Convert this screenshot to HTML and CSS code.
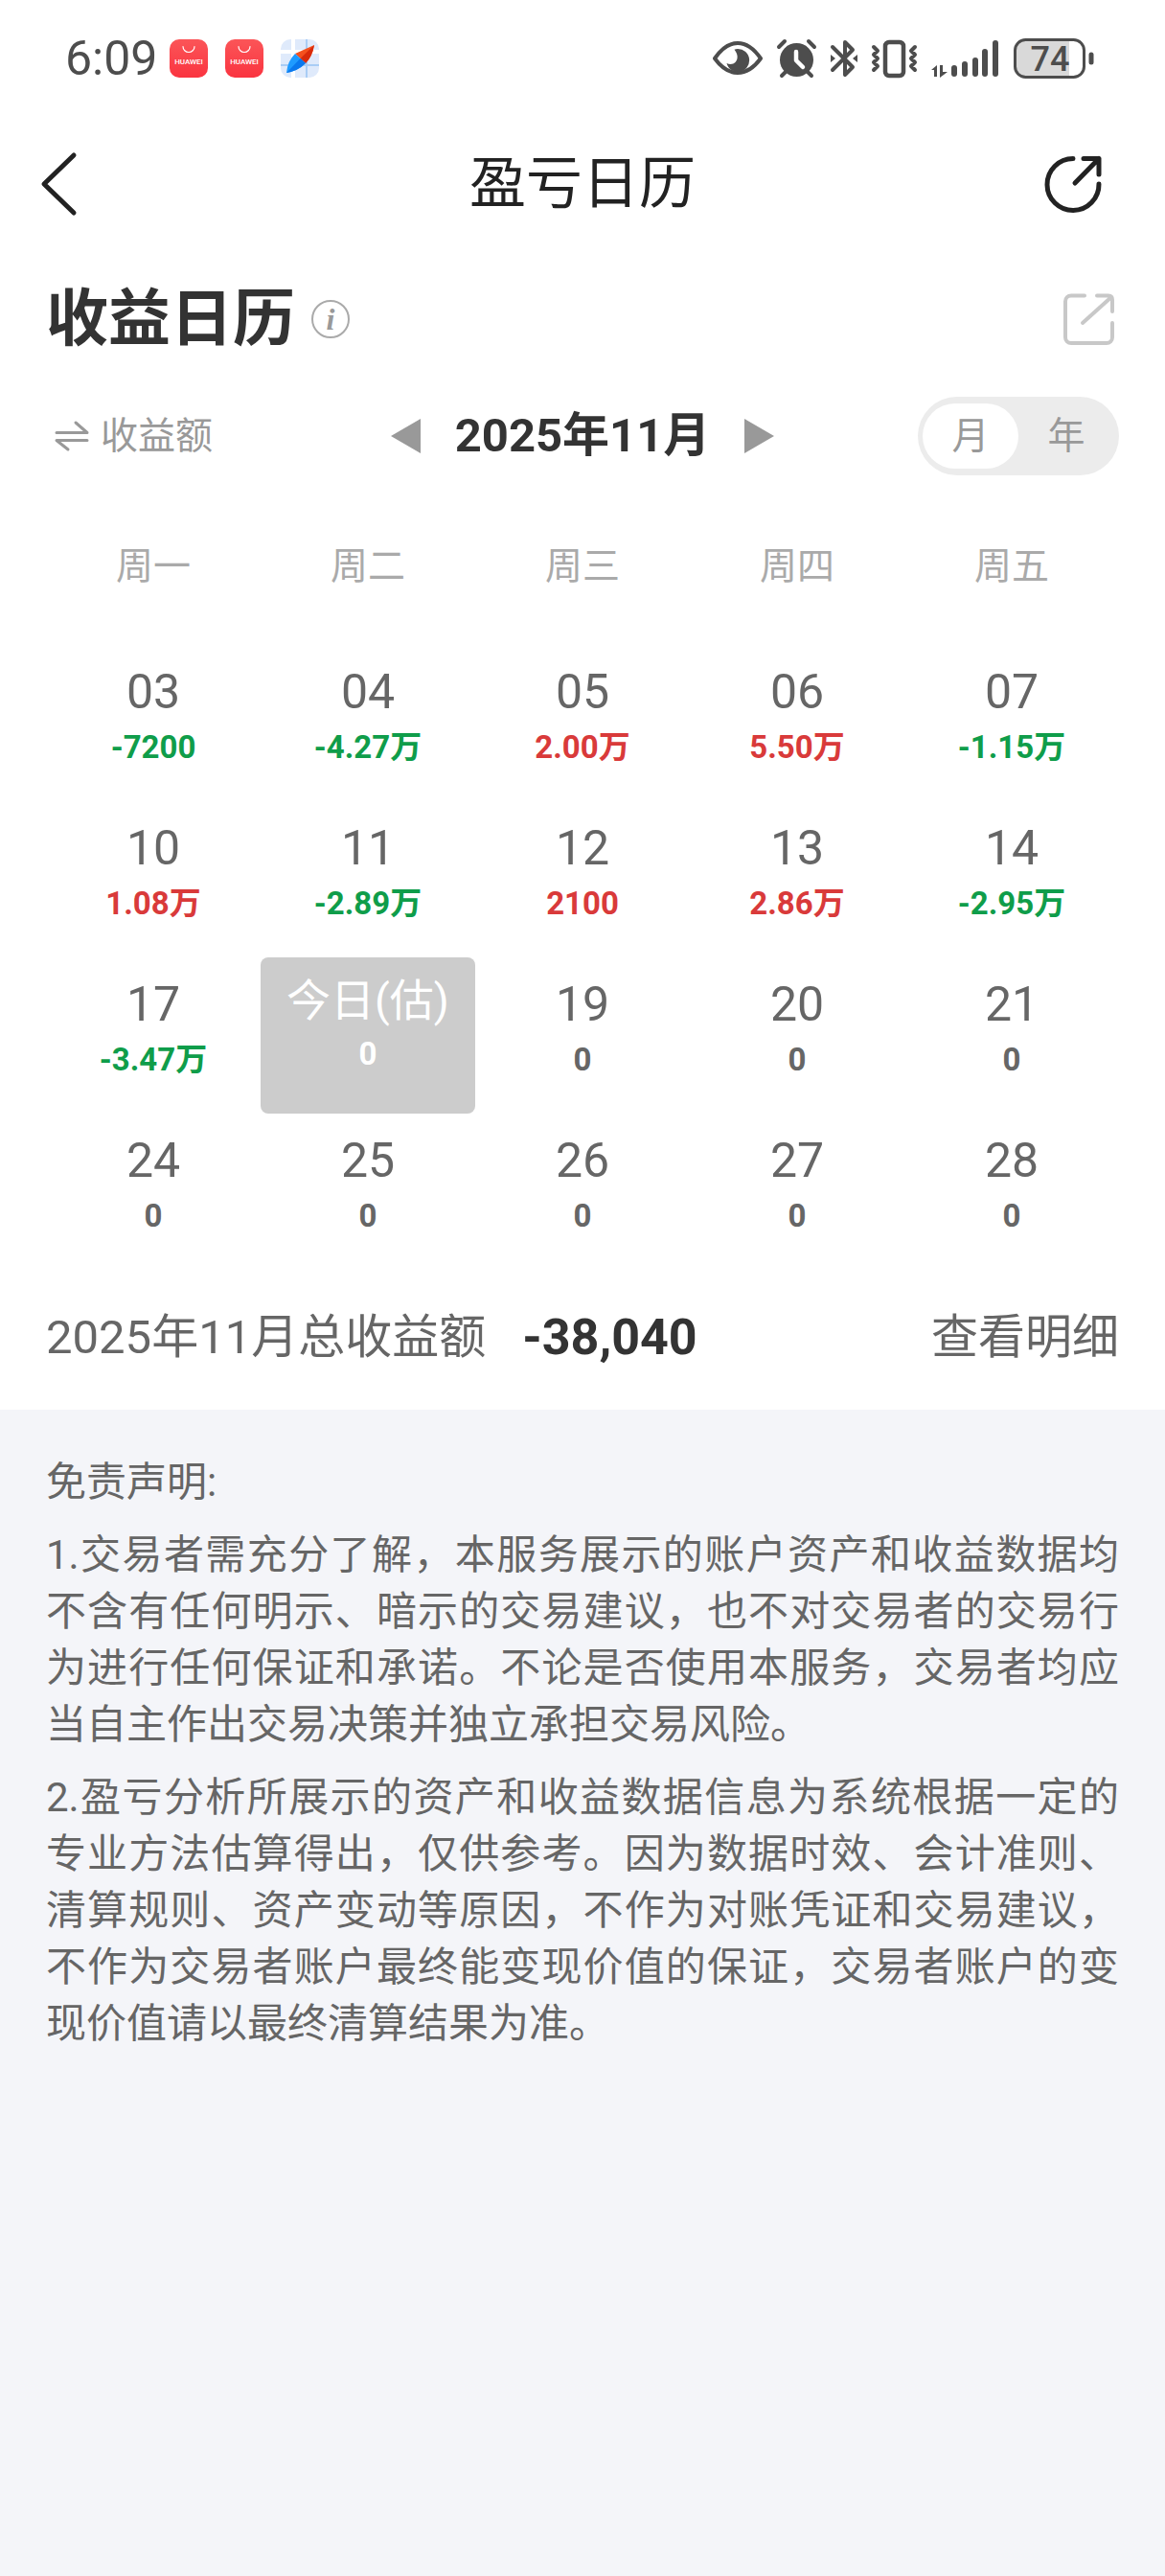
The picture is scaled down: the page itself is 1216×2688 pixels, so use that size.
FILE: index.html
```
<!DOCTYPE html>
<html lang="zh-CN">

<head>
    <meta charset="UTF-8">
    <meta name="viewport" content="width=device-width, initial-scale=1.0">
    <title>盈亏日历</title>
    <link rel="stylesheet" href="styles.css">
</head>

<body>

    <div class="panel">
        <div class="status-bar">
            <span class="time">6:09</span>
            <div class="apps">
                <svg width="40" height="40" viewBox="0 0 40 40">
                    <defs>
                        <linearGradient id="red" x1="0" y1="0" x2="0" y2="1">
                            <stop offset="0" stop-color="#fb5558" />
                            <stop offset="1" stop-color="#fa3440" />
                        </linearGradient>
                    </defs>
                    <rect width="40" height="40" rx="10" fill="url(#red)" />
                    <path d="M14 7.500a6 6 0 0 0 12 0" fill="none" stroke="#fff" stroke-width="1.200" stroke-linecap="round" />
                    <text x="20" y="26" class="app-text">HUAWEI</text>
                </svg>
                <svg width="40" height="40" viewBox="0 0 40 40">
                    <rect width="40" height="40" rx="10" fill="url(#red)" />
                    <path d="M14 7.500a6 6 0 0 0 12 0" fill="none" stroke="#fff" stroke-width="1.200" stroke-linecap="round" />
                    <text x="20" y="26" class="app-text">HUAWEI</text>
                </svg>
                <svg width="40" height="40" viewBox="0 0 40 40">
                    <defs>
                        <clipPath id="round"><rect width="40" height="40" rx="10" /></clipPath>
                    </defs>
                    <g clip-path="url(#round)">
                        <rect width="40" height="40" fill="#dfeafb" />
                        <path d="M0 13h40M13 0v40" stroke="#fff" stroke-width="4" />
                        <path d="M0 27h40M27 0v40" stroke="#a9cdf5" stroke-width="2" />
                    </g>
                    <path d="M35 6L15 15L26 25Q33 18 35 6Z" fill="#f4511e" />
                    <path d="M35 6L20.500 20L26 25Q33 18 35 6Z" fill="#d92b0b" />
                    <path d="M6 35Q7 23 15 15L26 25Q18 33 6 35Z" fill="#1f9bff" />
                    <path d="M6 35L20.500 20L26 25Q18 33 6 35Z" fill="#0a78ee" />
                </svg>
            </div>
            <div class="signals">
                <!-- eye -->
                <svg width="52" height="42" viewBox="0 0 52 42">
                    <path d="M2 21Q13 5 26 5T50 21Q39 36 26 36T2 21Z" fill="none" stroke="#4d4d4d" stroke-width="4" stroke-linejoin="round" />
                    <path d="M26 11a12 12 0 1 1-11.500 15c6 3 12-1 11-8c-.3-2.500-1.500-4-3-6.200q1.500-.8 3.500-.8Z" fill="#4d4d4d" />
                </svg>
                <!-- alarm -->
                <svg width="41" height="42" viewBox="0 0 41 42">
                    <circle cx="20.500" cy="22.500" r="17.500" fill="#4d4d4d" />
                    <path d="M2 9l6-6M39 9l-6-6M5 39l4-4M36 39l-4-4" stroke="#4d4d4d" stroke-width="4" stroke-linecap="round" />
                    <path d="M20 14v9l7 7" fill="none" stroke="#fff" stroke-width="4.500" stroke-linecap="round" stroke-linejoin="round" />
                </svg>
                <!-- bluetooth -->
                <svg width="28" height="42" viewBox="0 0 28 42">
                    <path d="M2 9l21 21l-8 8V4l8 8L2 33" fill="none" stroke="#4d4d4d" stroke-width="4" stroke-linecap="round" stroke-linejoin="round" />
                    <path d="M0 17l5 4l-5 4zM28 17l-5 4l5 4z" fill="#4d4d4d" />
                </svg>
                <!-- vibrate -->
                <svg width="47" height="42" viewBox="0 0 47 42">
                    <rect x="14" y="4" width="19" height="35" rx="4" fill="none" stroke="#4d4d4d" stroke-width="4.500" />
                    <path d="M2 9l4 4l-4 4l4 4l-4 4l4 4l-4 4M45 9l-4 4l4 4l-4 4l4 4l-4 4l4 4" fill="none" stroke="#4d4d4d" stroke-width="4" stroke-linecap="round" stroke-linejoin="round" />
                </svg>
                <!-- mobile signal -->
                <svg width="71" height="42" viewBox="0 0 71 42">
                    <path d="M0 33l6-5v12h-3v-7zM9 28h3v7h5l-8 6z" fill="#4d4d4d" />
                    <path d="M24 31v6M35 27v10M46 23v14M56 14v23M67 5v32" stroke="#4d4d4d" stroke-width="6" stroke-linecap="round" />
                </svg>
                <!-- battery -->
                <svg width="84" height="42" viewBox="0 0 84 42">
                    <path d="M12 2h46v38H12a10 10 0 0 1-10-10V12a10 10 0 0 1 10-10z" fill="#d9d9d9" />
                    <rect x="1.500" y="1.500" width="72" height="39" rx="11" fill="none" stroke="#4d4d4d" stroke-width="3" />
                    <path d="M81 17v8" stroke="#4d4d4d" stroke-width="5" stroke-linecap="round" />
                    <text x="38" y="34" class="battery-text">74</text>
                </svg>
            </div>
        </div>

        <div class="nav-bar">
            <button class="icon-btn" aria-label="返回">
                <svg width="44" height="70" viewBox="0 0 44 70">
                    <path d="M37 5L6 35L37 65" fill="none" stroke="#222" stroke-width="5" stroke-linecap="round" stroke-linejoin="round" />
                </svg>
            </button>
            <h1>盈亏日历</h1>
            <button class="icon-btn nav-share" aria-label="分享">
                <svg width="60" height="60" viewBox="0 0 60 60">
                    <path d="M30 3.500A27 27 0 1 0 57 30" fill="none" stroke="#222" stroke-width="5" stroke-linecap="round" />
                    <path d="M41 3.500H57V20M57 3.500L32 29" fill="none" stroke="#222" stroke-width="5" stroke-linecap="round" stroke-linejoin="round" />
                </svg>
            </button>
        </div>

        <div class="content">
            <div class="title-row">
                <h2>收益日历</h2>
                <button class="info-btn" aria-label="说明">i</button>
                <button class="icon-btn export-btn" aria-label="导出">
                    <svg width="54" height="54" viewBox="0 0 54 54">
                        <path d="M22 2.500H8A6 6 0 0 0 2 8.500V46a6 6 0 0 0 6 6H45a6 6 0 0 0 6-6V31" fill="none" stroke="#c8c8c8" stroke-width="4" stroke-linecap="round" />
                        <path d="M35 2.500H47Q51 2.500 51 7V19M50 4L20 31" fill="none" stroke="#c8c8c8" stroke-width="4" stroke-linecap="round" />
                    </svg>
                </button>
            </div>

            <div class="toolbar">
                <button class="switch-btn">
                    <svg width="36" height="32" viewBox="0 0 36 32">
                        <path d="M2 12.500H34L22 2M34 20.500H2L14 30" fill="none" stroke="#999" stroke-width="3" stroke-linecap="round" stroke-linejoin="round" />
                    </svg>
                    收益额
                </button>
                <div class="month-picker">
                    <button class="icon-btn" aria-label="上个月">
                        <svg width="31" height="36" viewBox="0 0 31 36"><path d="M31 0V36L0 18z" fill="#999" /></svg>
                    </button>
                    <span class="month">2025年11月</span>
                    <button class="icon-btn" aria-label="下个月">
                        <svg width="31" height="36" viewBox="0 0 31 36"><path d="M0 0V36L31 18z" fill="#999" /></svg>
                    </button>
                </div>
                <div class="segment">
                    <button class="active">月</button>
                    <button>年</button>
                </div>
            </div>

            <table class="calendar">
                <thead>
                    <tr>
                        <th>周一</th>
                        <th>周二</th>
                        <th>周三</th>
                        <th>周四</th>
                        <th>周五</th>
                    </tr>
                </thead>
                <tbody>
                    <tr>
                        <td><span class="day">03</span><span class="value down">-7200</span></td>
                        <td><span class="day">04</span><span class="value down">-4.27万</span></td>
                        <td><span class="day">05</span><span class="value up">2.00万</span></td>
                        <td><span class="day">06</span><span class="value up">5.50万</span></td>
                        <td><span class="day">07</span><span class="value down">-1.15万</span></td>
                    </tr>
                    <tr>
                        <td><span class="day">10</span><span class="value up">1.08万</span></td>
                        <td><span class="day">11</span><span class="value down">-2.89万</span></td>
                        <td><span class="day">12</span><span class="value up">2100</span></td>
                        <td><span class="day">13</span><span class="value up">2.86万</span></td>
                        <td><span class="day">14</span><span class="value down">-2.95万</span></td>
                    </tr>
                    <tr>
                        <td><span class="day">17</span><span class="value down">-3.47万</span></td>
                        <td class="today"><span class="day">今日(估)</span><span class="value">0</span></td>
                        <td><span class="day">19</span><span class="value">0</span></td>
                        <td><span class="day">20</span><span class="value">0</span></td>
                        <td><span class="day">21</span><span class="value">0</span></td>
                    </tr>
                    <tr>
                        <td><span class="day">24</span><span class="value">0</span></td>
                        <td><span class="day">25</span><span class="value">0</span></td>
                        <td><span class="day">26</span><span class="value">0</span></td>
                        <td><span class="day">27</span><span class="value">0</span></td>
                        <td><span class="day">28</span><span class="value">0</span></td>
                    </tr>
                </tbody>
            </table>

            <div class="summary">
                <span>2025年11月总收益额</span>
                <strong>-38,040</strong>
                <a href="#">查看明细</a>
            </div>
        </div>
    </div>

    <div class="disclaimer">
        <p>免责声明:</p>
        <p>1.交易者需充分了解，本服务展示的账户资产和收益数据均不含有任何明示、暗示的交易建议，也不对交易者的交易行为进行任何保证和承诺。不论是否使用本服务，交易者均应当自主作出交易决策并独立承担交易风险。</p>
        <p>2.盈亏分析所展示的资产和收益数据信息为系统根据一定的专业方法估算得出，仅供参考。因为数据时效、会计准则、清算规则、资产变动等原因，不作为对账凭证和交易建议，不作为交易者账户最终能变现价值的保证，交易者账户的变现价值请以最终清算结果为准。</p>
    </div>

</body>

</html>
```
FILE: styles.css
```
* {
    box-sizing: border-box;
}

body {
    margin: 0;
    background-color: #f4f5f9;
    color: #666;
    font-family: Roboto, "Noto Sans CJK SC", sans-serif;
}

button {
    border: 0;
    padding: 0;
    background: none;
    font-family: inherit;
    color: inherit;
}

svg {
    display: block;
    overflow: visible;
}

h1,
h2,
p {
    margin: 0;
}

.panel {
    background-color: #fff;
}

/* status bar */
.status-bar {
    display: flex;
    align-items: center;
    height: 128px;
    padding: 0 74px 6px 68px;
}

.time {
    font-size: 50px;
    line-height: 60px;
    color: #4d4d4d;
}

.apps {
    display: flex;
    gap: 18px;
    margin-left: 13px;
}

.app-text {
    font-size: 8px;
    font-weight: 500;
    fill: #fff;
    text-anchor: middle;
}

.signals {
    display: flex;
    gap: 15px;
    margin-left: auto;
}

.battery-text {
    font-size: 36px;
    font-weight: 500;
    fill: #4d4d4d;
    text-anchor: middle;
}

/* nav bar */
.nav-bar {
    display: grid;
    grid-template-columns: 1fr auto 1fr;
    align-items: center;
    height: 128px;
    padding: 0 40px;
}

.nav-bar h1 {
    font-size: 59px;
    font-weight: 400;
    line-height: 70px;
    color: #222;
}

.nav-share {
    justify-self: end;
    margin-right: 26px;
}

.content {
    padding: 0 48px;
}

.title-row {
    display: flex;
    align-items: center;
    height: 154px;
}

.title-row h2 {
    font-size: 65px;
    font-weight: 700;
    line-height: 70px;
    color: #333;
}

.info-btn {
    width: 40px;
    height: 40px;
    margin-left: 17px;
    border: 2px solid #aaa;
    border-radius: 50%;
    font: italic bold 32px/32px "Liberation Serif", serif;
    color: #999;
}

.export-btn {
    margin-left: auto;
    margin-right: 4px;
}

/* month switch */
.toolbar {
    display: grid;
    grid-template-columns: 1fr auto 1fr;
    align-items: center;
    height: 90px;
}

.switch-btn {
    display: flex;
    align-items: center;
    gap: 12px;
    padding-left: 9px;
    font-size: 39px;
    line-height: 50px;
    color: #999;
}

.month-picker {
    display: flex;
    align-items: center;
    gap: 36px;
}

.month {
    font-size: 49px;
    font-weight: 700;
    line-height: 70px;
    color: #333;
}

.segment {
    display: flex;
    justify-self: end;
    padding: 7px 5px;
    border-radius: 41px;
    background-color: #ececec;
}

.segment button {
    width: 100px;
    height: 68px;
    border-radius: 34px;
    font-size: 39px;
    line-height: 50px;
    color: #999;
}

.segment .active {
    background-color: #fff;
}

/* calendar */
.calendar {
    width: 100%;
    table-layout: fixed;
    border-collapse: collapse;
}

.calendar th {
    padding: 56px 0 47px;
    font-size: 39px;
    font-weight: 400;
    line-height: 70px;
    color: #aaa;
}

.calendar td {
    height: 163px;
    padding: 19px 0 0;
    text-align: center;
    vertical-align: top;
}

.day,
.value {
    display: block;
}

.day {
    font-size: 50px;
    line-height: 60px;
}

.value {
    font-size: 33px;
    font-weight: 700;
    line-height: 56px;
}

.up {
    color: #d93a3a;
}

.down {
    color: #0f9d4a;
}

.calendar .today {
    padding-top: 17px;
    border-radius: 8px;
    background-color: #ccc;
    color: #fff;
}

.today .day {
    font-size: 46px;
    line-height: 56px;
}

/* total */
.summary {
    display: flex;
    align-items: center;
    padding: 36px 0 40px;
    font-size: 49px;
    line-height: 70px;
}

.summary strong {
    margin-left: 38px;
    font-size: 52px;
    color: #333;
}

.summary a {
    margin-left: auto;
    color: #666;
    text-decoration: none;
}

.disclaimer {
    padding: 46px 48px;
    font-size: 42px;
    line-height: 59px;
    text-align: justify;
}

.disclaimer p + p {
    margin-top: 17px;
}
```
